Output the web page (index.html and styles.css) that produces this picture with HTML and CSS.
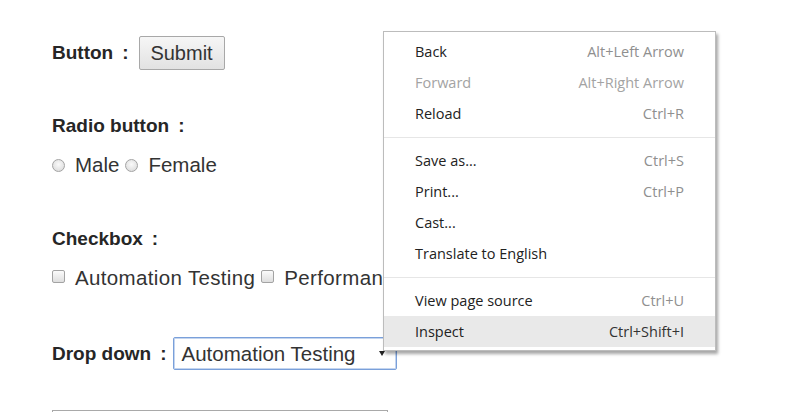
FILE: index.html
```html
<!DOCTYPE html>
<html>
<head>
<meta charset="utf-8">
<title>Form</title>
<link rel="stylesheet" href="styles.css">
</head>
<body>
<div class="page">
  <div class="row row-button">
    <span class="label">Button<span class="colon">:</span></span>
    <button class="submit" type="button">Submit</button>
  </div>
  <div class="row row-label gap-lg-a">
    <span class="label">Radio button<span class="colon">:</span></span>
  </div>
  <div class="row row-opts">
    <input class="radio" type="radio" name="g"><span class="opt">Male</span>
    <input class="radio second" type="radio" name="g"><span class="opt">Female</span>
  </div>
  <div class="row row-label gap-lg-b">
    <span class="label">Checkbox<span class="colon">:</span></span>
  </div>
  <div class="row row-opts">
    <input class="check" type="checkbox"><span class="opt wide">Automation Testing</span>
    <input class="check second-check" type="checkbox"><span class="opt wide">Performance Testing</span>
  </div>
  <div class="row row-select">
    <span class="label">Drop down<span class="colon">:</span></span>
    <div class="select">
      <span class="select-text">Automation Testing</span>
      <span class="arrow"></span>
    </div>
  </div>
  <div class="textbox"></div>
</div>

<div class="menu">
  <div class="item"><span>Back</span><span class="key">Alt+Left Arrow</span></div>
  <div class="item disabled"><span>Forward</span><span class="key">Alt+Right Arrow</span></div>
  <div class="item"><span>Reload</span><span class="key">Ctrl+R</span></div>
  <div class="sep"></div>
  <div class="item"><span>Save as...</span><span class="key">Ctrl+S</span></div>
  <div class="item"><span>Print...</span><span class="key">Ctrl+P</span></div>
  <div class="item"><span>Cast...</span></div>
  <div class="item"><span>Translate to English</span></div>
  <div class="sep"></div>
  <div class="item"><span>View page source</span><span class="key">Ctrl+U</span></div>
  <div class="item active"><span>Inspect</span><span class="key">Ctrl+Shift+I</span></div>
</div>
</body>
</html>
```

FILE: styles.css
```css
html, body {
  margin: 0;
  padding: 0;
  background: #ffffff;
  overflow: hidden;
  height: 412px;
}

.page {
  padding: 36px 0 0 52px;
  display: flex;
  flex-direction: column;
  font-family: "Liberation Sans", Arial, sans-serif;
  color: #2b2b2b;
}

.row {
  display: flex;
  align-items: center;
}

.row-button { height: 34px; }
.row-label { height: 28px; }
.gap-lg-a { margin-top: 42px; }
.gap-lg-b { margin-top: 46px; }
.row-opts { height: 28px; margin-top: 11px; }
.row-select { height: 33px; margin-top: 45px; }

.label {
  font-weight: bold;
  font-size: 19px;
  color: #262626;
}

.colon {
  margin-left: 9px;
}

.submit {
  margin-left: 10px;
  width: 86px;
  height: 34px;
  border: 1px solid #a8a8a8;
  border-radius: 2px;
  background: linear-gradient(#f6f6f6, #e2e2e2);
  font-family: "Liberation Sans", Arial, sans-serif;
  font-size: 20px;
  color: #333;
  padding: 0;
}

.opt {
  font-size: 20.5px;
  color: #333;
}

.opt.wide {
  letter-spacing: 0.35px;
}

.radio, .check {
  appearance: none;
  -webkit-appearance: none;
  margin: 0 10px 0 0;
  width: 13px;
  height: 13px;
  border: 1px solid #a3a3a3;
  background: radial-gradient(circle at 50% 40%, #fafafa, #d6d6d6);
  box-sizing: border-box;
}

.radio { border-radius: 50%; }
.check { border-radius: 2px; background: linear-gradient(#fbfbfb, #dedede); margin-bottom: 3px; }

.radio.second { margin-left: 6px; }
.check.second-check { margin-left: 6px; }

.select {
  margin-left: 6px;
  width: 224px;
  height: 33px;
  box-sizing: border-box;
  border: 1px solid #7aa0da;
  box-shadow: inset 0 0 0 1px #c4d5ef;
  border-radius: 2px;
  display: flex;
  align-items: center;
  padding-left: 8px;
  position: relative;
}

.select-text {
  font-size: 20.5px;
  color: #333;
}

.arrow {
  position: absolute;
  right: 11px;
  top: 13px;
  width: 0;
  height: 0;
  border-left: 3px solid transparent;
  border-right: 3px solid transparent;
  border-top: 5px solid #222;
}

.textbox {
  margin-top: 40px;
  width: 336px;
  height: 2px;
  border: 1px solid #a9a9a9;
  border-bottom: none;
  box-sizing: border-box;
}

.menu {
  position: absolute;
  left: 383px;
  top: 31px;
  width: 333px;
  height: 320px;
  box-sizing: border-box;
  background: #ffffff;
  border: 1px solid #bcbcbc;
  box-shadow: 2px 3px 3px rgba(0, 0, 0, 0.35);
  padding: 4px 0;
  font-family: "Open Sans", "Noto Sans", sans-serif;
  font-size: 14.5px;
  color: #222;
}

.item {
  height: 31px;
  display: flex;
  align-items: center;
  justify-content: space-between;
  padding: 0 31px;
}

.item .key {
  color: #8f8f8f;
}

.item.disabled {
  color: #a3a3a3;
}

.item.disabled .key {
  color: #a3a3a3;
}

.item.active {
  background: #e9e9e9;
}

.item.active .key {
  color: #333;
}

.sep {
  height: 16px;
  display: flex;
  align-items: center;
}

.sep::before {
  content: "";
  display: block;
  width: 100%;
  height: 1px;
  background: #e6e6e6;
}
```
